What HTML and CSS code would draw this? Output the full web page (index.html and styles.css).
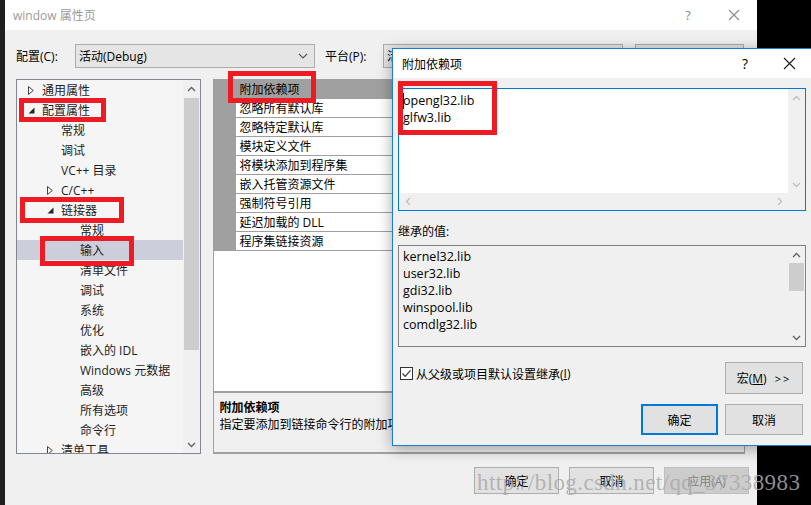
FILE: index.html
```html
<!DOCTYPE html>
<html lang="zh-CN">
<head>
<meta charset="utf-8">
<title>window 属性页</title>
<link rel="stylesheet" href="styles.css">
</head>
<body>
<div class="screen">
  <div class="edge"></div>
  <div class="window">
    <div class="titlebar">
      <span class="title">window 属性页</span>
      <span class="tb-btn">?</span>
      <span class="tb-btn"><svg width="12" height="12" viewBox="0 0 12 12"><path d="M1 1 L11 11 M11 1 L1 11" stroke="#8a8a8a" stroke-width="1.1" fill="none"/></svg></span>
    </div>
    <div class="wbody">
      <div class="config-row">
        <span class="lbl-config">配置(C):</span>
        <div class="combo combo-config"><span class="combo-text">活动(Debug)</span><svg class="chev" width="10" height="6" viewBox="0 0 10 6"><path d="M1 1 L5 5 L9 1" stroke="#555" stroke-width="1.1" fill="none"/></svg></div>
        <span class="lbl-plat">平台(P):</span>
        <div class="combo combo-plat"><span class="combo-text">活动(Win32)</span></div>
        <div class="btn btn-cfg">配置管理器(O)...</div>
      </div>
      <div class="main">
        <div class="tree">
          <div class="tree-items">
            <div class="ti l0"><span class="tw"><svg width="6" height="9" viewBox="0 0 6 9"><path d="M0.5 0.5 L5.3 4.5 L0.5 8.5 Z" fill="none" stroke="#444" stroke-width="1"/></svg></span>通用属性</div>
            <div class="ti l0"><span class="tw"><svg width="7" height="7" viewBox="0 0 7 7"><path d="M6.5 0.5 L6.5 6.5 L0.5 6.5 Z" fill="#262626"/></svg></span>配置属性</div>
            <div class="ti l1"><span class="tw"></span>常规</div>
            <div class="ti l1"><span class="tw"></span>调试</div>
            <div class="ti l1"><span class="tw"></span>VC++ 目录</div>
            <div class="ti l1 sm"><span class="tw"><svg width="6" height="9" viewBox="0 0 6 9"><path d="M0.5 0.5 L5.3 4.5 L0.5 8.5 Z" fill="none" stroke="#444" stroke-width="1"/></svg></span>C/C++</div>
            <div class="ti l1"><span class="tw"><svg width="7" height="7" viewBox="0 0 7 7"><path d="M6.5 0.5 L6.5 6.5 L0.5 6.5 Z" fill="#262626"/></svg></span>链接器</div>
            <div class="ti l2"><span class="tw"></span>常规</div>
            <div class="ti l2 sel"><span class="tw"></span>输入</div>
            <div class="ti l2"><span class="tw"></span>清单文件</div>
            <div class="ti l2"><span class="tw"></span>调试</div>
            <div class="ti l2"><span class="tw"></span>系统</div>
            <div class="ti l2"><span class="tw"></span>优化</div>
            <div class="ti l2"><span class="tw"></span>嵌入的 IDL</div>
            <div class="ti l2"><span class="tw"></span>Windows 元数据</div>
            <div class="ti l2"><span class="tw"></span>高级</div>
            <div class="ti l2"><span class="tw"></span>所有选项</div>
            <div class="ti l2"><span class="tw"></span>命令行</div>
            <div class="ti l1"><span class="tw"><svg width="6" height="9" viewBox="0 0 6 9"><path d="M0.5 0.5 L5.3 4.5 L0.5 8.5 Z" fill="none" stroke="#444" stroke-width="1"/></svg></span>清单工具</div>
          </div>
          <div class="vscroll">
            <div class="arrow"><svg width="9" height="6" viewBox="0 0 9 6"><path d="M1 5 L4.5 1.5 L8 5" stroke="#606060" stroke-width="1.3" fill="none"/></svg></div>
            <div class="thumb tree-thumb"></div>
            <div class="track"></div>
            <div class="arrow"><svg width="9" height="6" viewBox="0 0 9 6"><path d="M1 1 L4.5 4.5 L8 1" stroke="#606060" stroke-width="1.3" fill="none"/></svg></div>
          </div>
        </div>
        <div class="right">
          <div class="grid">
            <div class="grow ghead"><span class="gutter"></span><span class="gname">附加依赖项</span><span class="gval">opengl32.lib;glfw3.lib;%(AdditionalDependencies)</span></div>
            <div class="grow"><span class="gutter"></span><span class="gname">忽略所有默认库</span><span class="gval"></span></div>
            <div class="grow"><span class="gutter"></span><span class="gname">忽略特定默认库</span><span class="gval"></span></div>
            <div class="grow"><span class="gutter"></span><span class="gname">模块定义文件</span><span class="gval"></span></div>
            <div class="grow"><span class="gutter"></span><span class="gname">将模块添加到程序集</span><span class="gval"></span></div>
            <div class="grow"><span class="gutter"></span><span class="gname">嵌入托管资源文件</span><span class="gval"></span></div>
            <div class="grow"><span class="gutter"></span><span class="gname">强制符号引用</span><span class="gval"></span></div>
            <div class="grow"><span class="gutter"></span><span class="gname">延迟加载的 DLL</span><span class="gval"></span></div>
            <div class="grow"><span class="gutter"></span><span class="gname">程序集链接资源</span><span class="gval"></span></div>
          </div>
          <div class="desc">
            <div class="desc-title">附加依赖项</div>
            <div class="desc-text">指定要添加到链接命令行的附加项。[例如 kernel32.lib]</div>
          </div>
        </div>
      </div>
      <div class="buttons">
        <div class="btn wbtn">确定</div>
        <div class="btn wbtn">取消</div>
        <div class="btn wbtn disabled">应用(A)</div>
      </div>
    </div>
  </div>
  <div class="blackfill"></div>
</div>

<div class="dialog">
  <div class="dtitle">
    <span class="dtitle-text">附加依赖项</span>
    <span class="dt-btn">?</span>
    <span class="dt-btn"><svg width="13" height="13" viewBox="0 0 13 13"><path d="M1 1 L12 12 M12 1 L1 12" stroke="#1a1a1a" stroke-width="1.1" fill="none"/></svg></span>
  </div>
  <div class="dbody">
    <div class="edit">
      <div class="edit-main">
        <div class="edit-text"><span class="caret"></span>opengl32.lib<br>glfw3.lib</div>
        <div class="vscroll dis">
          <div class="arrow"><svg width="9" height="6" viewBox="0 0 9 6"><path d="M1 5 L4.5 1.5 L8 5" stroke="#c0c0c0" stroke-width="1.3" fill="none"/></svg></div>
          <div class="track"></div>
          <div class="arrow"><svg width="9" height="6" viewBox="0 0 9 6"><path d="M1 1 L4.5 4.5 L8 1" stroke="#c0c0c0" stroke-width="1.3" fill="none"/></svg></div>
        </div>
      </div>
      <div class="hscroll">
        <div class="harrow"><svg width="6" height="9" viewBox="0 0 6 9"><path d="M5 1 L1.5 4.5 L5 8" stroke="#c0c0c0" stroke-width="1.3" fill="none"/></svg></div>
        <div class="htrack"></div>
        <div class="harrow"><svg width="6" height="9" viewBox="0 0 6 9"><path d="M1 1 L4.5 4.5 L1 8" stroke="#c0c0c0" stroke-width="1.3" fill="none"/></svg></div>
        <div class="corner"></div>
      </div>
    </div>
    <div class="inh-label">继承的值:</div>
    <div class="inh-list">
      <div class="inh-items">
        <div>kernel32.lib</div>
        <div>user32.lib</div>
        <div>gdi32.lib</div>
        <div>winspool.lib</div>
        <div>comdlg32.lib</div>
      </div>
      <div class="vscroll">
        <div class="arrow"><svg width="9" height="6" viewBox="0 0 9 6"><path d="M1 5 L4.5 1.5 L8 5" stroke="#606060" stroke-width="1.3" fill="none"/></svg></div>
        <div class="thumb list-thumb"></div>
        <div class="track"></div>
        <div class="arrow"><svg width="9" height="6" viewBox="0 0 9 6"><path d="M1 1 L4.5 4.5 L8 1" stroke="#606060" stroke-width="1.3" fill="none"/></svg></div>
      </div>
    </div>
    <div class="opt-row">
      <label class="chk"><span class="box"><svg width="11" height="11" viewBox="0 0 11 11"><path d="M1.5 5.5 L4.2 8.3 L9.5 2.3" stroke="#333" stroke-width="1.2" fill="none"/></svg></span>从父级或项目默认设置继承(<u>I</u>)</label>
      <div class="btn dbtn">宏(<u>M</u>)<span class="gt">&gt;&gt;</span></div>
    </div>
    <div class="dbuttons">
      <div class="btn dbtn ok">确定</div>
      <div class="btn dbtn">取消</div>
    </div>
  </div>
</div>

<div class="redbox rb1"></div>
<div class="redbox rb2"></div>
<div class="redbox rb3"></div>
<div class="redbox rb4"></div>
<div class="redbox rb5"></div>

<div class="watermark">http://blog.csdn.net/qq_37338983</div>
</body>
</html>
```

FILE: styles.css
```css
* { box-sizing: border-box; }
html, body { margin: 0; padding: 0; }
body {
  width: 811px;
  height: 505px;
  overflow: hidden;
  background: #000;
  position: relative;
  font-family: "Open Sans", "Noto Sans CJK SC", sans-serif;
  font-size: 12px;
  color: #000;
}

.screen { display: flex; height: 505px; }
.edge { width: 5px; background: #1f1f1f; }
.blackfill { flex: 1; background: #000; }

.window {
  width: 752px;
  background: #f0f0f0;
  display: flex;
  flex-direction: column;
}
.titlebar {
  height: 30px;
  background: #fff;
  display: flex;
  align-items: center;
  padding-left: 8px;
  color: #9a9a9a;
  font-size: 12px;
}
.title { flex: 1; }
.tb-btn {
  width: 46px;
  text-align: center;
  display: flex;
  align-items: center;
  justify-content: center;
  color: #8a8a8a;
  font-size: 13px;
}

.wbody {
  flex: 1;
  padding: 14px 8px 0 11px;
  display: flex;
  flex-direction: column;
}
.config-row { display: flex; align-items: center; height: 24px; }
.lbl-config { width: 59px; }
.lbl-plat { width: 58px; margin-left: 10px; }
.combo {
  height: 24px;
  border: 1px solid #acacac;
  background: #e5e5e5;
  display: flex;
  align-items: center;
  padding-left: 3px;
}
.combo-text { flex: 1; }
.combo-config { width: 240px; }
.combo-config .chev { margin-right: 6px; }
.combo-plat { width: 240px; }
.btn {
  background: #e1e1e1;
  border: 1px solid #adadad;
  display: flex;
  align-items: center;
  justify-content: center;
}
.btn-cfg { width: 109px; height: 24px; margin-left: 12px; }

.main { display: flex; margin-top: 11px; height: 375px; }

.tree {
  width: 186px;
  border: 1px solid #828790;
  background: #f5f5f5;
  display: flex;
  overflow: hidden;
}
.tree-items { flex: 1; overflow: hidden; color: #1e1e1e; }
.ti {
  height: 20px;
  line-height: 20px;
  display: flex;
  align-items: center;
  white-space: nowrap;
  padding-top: 1px;
}
.tw { width: 16px; height: 19px; display: flex; align-items: center; padding-left: 2px; }
.l0 { padding-left: 9px; }
.l1 { padding-left: 28px; }
.l2 { padding-left: 47px; }
.sel { background: #cccedb; }

.vscroll {
  width: 17px;
  background: #f0f0f0;
  display: flex;
  flex-direction: column;
  align-items: center;
}
.arrow { height: 17px; width: 17px; display: flex; align-items: center; justify-content: center; }
.thumb { width: 15px; background: #cdcdcd; }
.tree-thumb { height: 252px; margin-top: 1px; }
.track { flex: 1; }

.right { flex: 1; margin-left: 12px; margin-right: 4px; display: flex; flex-direction: column; }
.grid {
  height: 314px;
  background: #fff;
  border: 1px solid #a0a0a0;
  border-top: none;
  overflow: hidden;
}
.grow { display: flex; height: 19px; white-space: nowrap; }
.gutter { width: 22px; background: #a0a0a0; flex: none; }
.gname {
  width: 230px;
  flex: none;
  padding-left: 3px;
  line-height: 19px;
  border-bottom: 1px solid #a0a0a0;
  border-right: 1px solid #a0a0a0;
  overflow: hidden;
}
.gval { flex: 1; border-bottom: 1px solid #a0a0a0; line-height: 19px; padding-left: 3px; overflow: hidden; }
.ghead { height: 20px; background: #a0a0a0; }
.ghead .gname, .ghead .gval { line-height: 21px; border: none; }

.desc {
  height: 62px;
  border: 1px solid #a0a0a0;
  border-bottom: 2px solid #a0a0a0;
  padding: 6px 5px 0;
  line-height: 17px;
  white-space: nowrap;
  overflow: hidden;
}
.desc-title { font-weight: bold; }

.buttons { display: flex; justify-content: flex-end; gap: 10px; margin-top: 13px; }
.wbtn { width: 85px; height: 27px; }
.disabled { background: #cccccc; border-color: #bfbfbf; color: #838383; }

/* dialog */
.dialog {
  position: absolute;
  left: 392px;
  top: 48px;
  width: 420px;
  height: 398px;
  border: 1px solid #1c7cd6;
  background: #f0f0f0;
  box-shadow: 0 3px 14px rgba(0,0,0,0.35);
  display: flex;
  flex-direction: column;
}
.dtitle {
  height: 29px;
  background: #fff;
  display: flex;
  align-items: center;
  padding-left: 9px;
}
.dtitle-text { flex: 1; }
.dt-btn { width: 44px; display: flex; justify-content: center; align-items: center; font-size: 14px; }
.dbody { padding: 10px 5px 0 5px; display: flex; flex-direction: column; }

.edit {
  height: 123px;
  border: 1px solid #0078d7;
  background: #fff;
  display: flex;
  flex-direction: column;
}
.edit-main { flex: 1; display: flex; }
.edit-text { flex: 1; padding: 3px 0 0 4px; line-height: 17px; font-size: 12.5px; position: relative; }
.caret { position: absolute; left: 4px; top: 4px; width: 1px; height: 16px; background: #000; }
.vscroll.dis { background: #f0f0f0; }
.hscroll { height: 17px; display: flex; background: #f0f0f0; }
.harrow { width: 17px; display: flex; align-items: center; justify-content: center; }
.htrack { flex: 1; }
.corner { width: 17px; background: #f0f0f0; }

.inh-label { margin-top: 12px; line-height: 17px; }
.inh-list {
  margin-top: 5px;
  height: 102px;
  border: 1px solid #828282;
  background: #f0f0f0;
  display: flex;
}
.inh-items { flex: 1; padding: 2px 0 0 4px; line-height: 17px; font-size: 12.5px; }
.list-thumb { height: 28px; margin-top: 0; }

.opt-row { margin-top: 15px; display: flex; height: 32px; }
.chk { flex: 1; display: flex; align-items: center; height: 17px; margin-top: 3px; padding-left: 2px; }
.box {
  width: 13px;
  height: 13px;
  border: 1px solid #333;
  background: #fff;
  margin-right: 3px;
  display: flex;
  align-items: center;
  justify-content: center;
}
.dbtn { width: 78px; height: 32px; }
.opt-row .dbtn { margin-right: 3px; }
.gt { margin-left: 8px; letter-spacing: 2px; font-size: 11px; }
.dbuttons { margin-top: 10px; display: flex; justify-content: flex-end; gap: 7px; padding-right: 3px; height: 31px; }
.dbuttons .dbtn { height: 31px; }
.ok { width: 77px; border: 2px solid #0078d7; }

/* red annotation boxes drawn over the screenshot */
.redbox { position: absolute; border: 5px solid #ed1c24; }
.rb1 { left: 19px; top: 98px; width: 87px; height: 24px; }
.rb2 { left: 20px; top: 197px; width: 104px; height: 26px; }
.rb3 { left: 40px; top: 236px; width: 94px; height: 30px; }
.rb4 { left: 228px; top: 71px; width: 88px; height: 32px; }
.rb5 { left: 398px; top: 81px; width: 99px; height: 54px; }

.watermark {
  position: absolute;
  left: 477px;
  top: 470px;
  font-family: "Liberation Serif", serif;
  font-size: 23px;
  letter-spacing: 0.4px;
  color: rgba(170,170,170,0.85);
  white-space: nowrap;
  pointer-events: none;
}
```
